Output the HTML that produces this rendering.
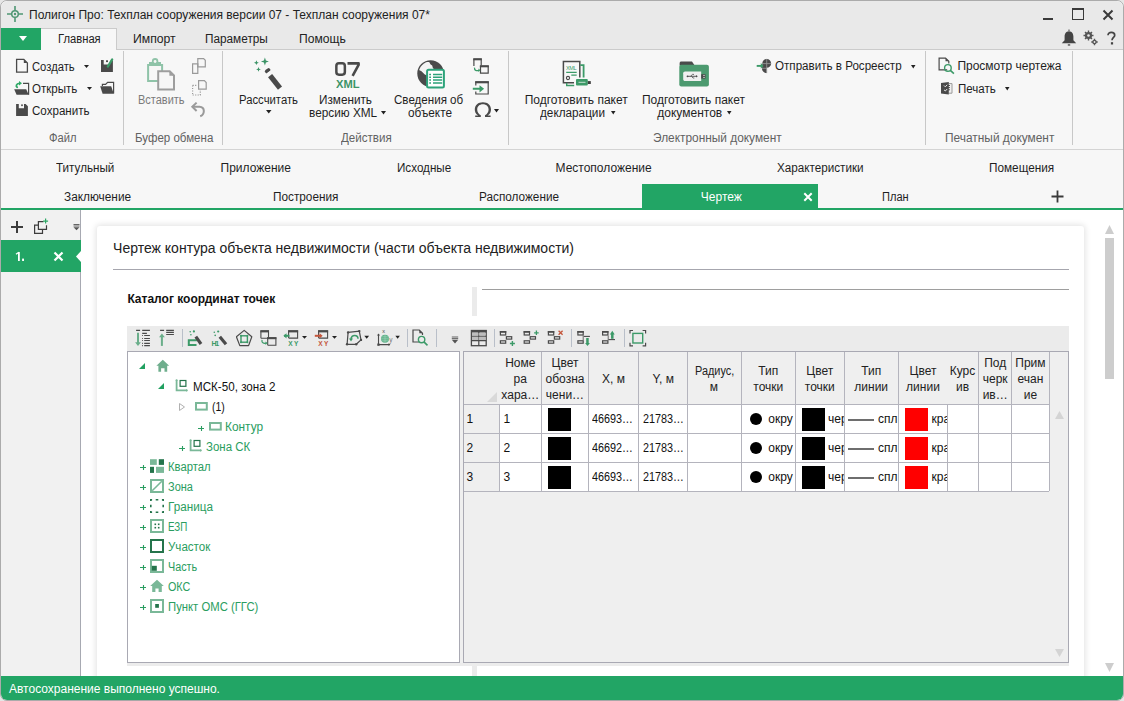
<!DOCTYPE html>
<html><head><meta charset="utf-8"><style>
html,body{margin:0;padding:0;width:1124px;height:701px;overflow:hidden;background:#e6e6e6;}
body{position:relative;font-family:'Liberation Sans', sans-serif;}
div,svg{position:absolute;box-sizing:border-box;}
</style></head><body>
<div style="left:0;top:0;width:1124px;height:701px;background:#ffffff;border:1px solid #ababab;border-radius:7px 7px 7px 7px;overflow:hidden"></div>
<div style="left:1px;top:1px;width:1122px;height:49px;background:#e9e9e9;border-radius:7px 7px 0 0"></div>
<div style="left:1px;top:49px;width:1122px;height:1px;background:#cbcbcb;"></div>
<div style="left:1px;top:28px;width:40px;height:22px;background:#22a565;"></div>
<svg style="left:19px;top:36px;" width="8" height="5" viewBox="0 0 8 5"><path d="M0 0H8L4 5Z" fill="#fff"/></svg>
<div style="left:41px;top:28px;width:76px;height:22px;background:#f7f7f7;border-top:1px solid #cbcbcb;border-right:1px solid #cbcbcb"></div>
<div style="left:1px;top:50px;width:1122px;height:99px;background:#f7f7f7;"></div>
<div style="left:1px;top:149px;width:1122px;height:1px;background:#d4d4d4;"></div>
<div style="left:123px;top:51px;width:1px;height:94px;background:#c8c8c8;"></div>
<div style="left:222px;top:51px;width:1px;height:94px;background:#c8c8c8;"></div>
<div style="left:508px;top:51px;width:1px;height:94px;background:#c8c8c8;"></div>
<div style="left:925px;top:51px;width:1px;height:94px;background:#c8c8c8;"></div>
<div style="left:1072px;top:51px;width:1px;height:94px;background:#c8c8c8;"></div>
<div style="left:1px;top:150px;width:1122px;height:58px;background:#f7f7f7;"></div>
<div style="left:1px;top:208px;width:1122px;height:2px;background:#22a565;"></div>
<div style="left:642px;top:184px;width:176px;height:24px;background:#22a565;"></div>
<div style="left:1px;top:210px;width:79px;height:466px;background:#f1f1f1;"></div>
<div style="left:80px;top:210px;width:1px;height:466px;background:#a7a9b2;"></div>
<div style="left:1px;top:240px;width:80px;height:32px;background:#22a565;"></div>
<svg style="left:76px;top:250.5px;" width="5" height="11" viewBox="0 0 5 11"><path d="M5 0V11L0 5.5Z" fill="#fff"/></svg>
<div style="left:97px;top:226px;width:987px;height:470px;background:#fff;border-radius:3px;box-shadow:0 0 6px 1px rgba(0,0,0,0.12)"></div>
<div style="left:1105px;top:238px;width:9px;height:141px;background:#cdcdcd;"></div>
<svg style="left:1105px;top:225px;" width="9" height="9" viewBox="0 0 9 9"><path d="M0 9H9L4.5 0Z" fill="#cdcdcd"/></svg>
<svg style="left:1105px;top:663px;" width="9" height="9" viewBox="0 0 9 9"><path d="M0 0H9L4.5 9Z" fill="#cdcdcd"/></svg>
<div style="left:1px;top:676px;width:1122px;height:24px;background:#22a565;border-radius:0 0 6px 6px"></div>
<div style="left:29.00px;top:9px;font-size:12px;line-height:12px;color:#222;font-weight:normal;white-space:pre;">Полигон Про: Техплан сооружения версии 07 - Техплан сооружения 07*</div>
<div style="left:57.70px;top:33px;font-size:12px;line-height:12px;color:#222;font-weight:normal;white-space:pre;transform:scaleX(0.9346);transform-origin:0 0;">Главная</div>
<div style="left:132.60px;top:33px;font-size:12px;line-height:12px;color:#222;font-weight:normal;white-space:pre;transform:scaleX(1.0178);transform-origin:0 0;">Импорт</div>
<div style="left:205.20px;top:33px;font-size:12px;line-height:12px;color:#222;font-weight:normal;white-space:pre;transform:scaleX(0.9817);transform-origin:0 0;">Параметры</div>
<div style="left:298.70px;top:33px;font-size:12px;line-height:12px;color:#222;font-weight:normal;white-space:pre;transform:scaleX(1.0073);transform-origin:0 0;">Помощь</div>
<div style="left:32.20px;top:61px;font-size:12px;line-height:12px;color:#1f1f1f;font-weight:normal;white-space:pre;transform:scaleX(0.9362);transform-origin:0 0;">Создать</div>
<div style="left:32.20px;top:83px;font-size:12px;line-height:12px;color:#1f1f1f;font-weight:normal;white-space:pre;transform:scaleX(0.9631);transform-origin:0 0;">Открыть</div>
<div style="left:32.20px;top:104.5px;font-size:12px;line-height:12px;color:#1f1f1f;font-weight:normal;white-space:pre;transform:scaleX(0.9658);transform-origin:0 0;">Сохранить</div>
<div style="left:49.20px;top:131.5px;font-size:12px;line-height:12px;color:#626262;font-weight:normal;white-space:pre;transform:scaleX(0.9317);transform-origin:0 0;">Файл</div>
<div style="left:137.90px;top:94px;font-size:12px;line-height:12px;color:#7b7b7b;font-weight:normal;white-space:pre;transform:scaleX(0.9140);transform-origin:0 0;">Вставить</div>
<div style="left:134.50px;top:131.5px;font-size:12px;line-height:12px;color:#626262;font-weight:normal;white-space:pre;transform:scaleX(0.9602);transform-origin:0 0;">Буфер обмена</div>
<div style="left:238.70px;top:94px;font-size:12px;line-height:12px;color:#1f1f1f;font-weight:normal;white-space:pre;transform:scaleX(0.9421);transform-origin:0 0;">Рассчитать</div>
<div style="left:318.90px;top:94px;font-size:12px;line-height:12px;color:#1f1f1f;font-weight:normal;white-space:pre;transform:scaleX(0.9789);transform-origin:0 0;">Изменить</div>
<div style="left:308.70px;top:106.6px;font-size:12px;line-height:12px;color:#1f1f1f;font-weight:normal;white-space:pre;transform:scaleX(0.9839);transform-origin:0 0;">версию XML</div>
<div style="left:341.30px;top:131.5px;font-size:12px;line-height:12px;color:#626262;font-weight:normal;white-space:pre;transform:scaleX(0.9643);transform-origin:0 0;">Действия</div>
<div style="left:394.20px;top:94px;font-size:12px;line-height:12px;color:#1f1f1f;font-weight:normal;white-space:pre;transform:scaleX(0.9651);transform-origin:0 0;">Сведения об</div>
<div style="left:407.50px;top:106.6px;font-size:12px;line-height:12px;color:#1f1f1f;font-weight:normal;white-space:pre;transform:scaleX(0.9832);transform-origin:0 0;">объекте</div>
<div style="left:524.70px;top:94px;font-size:12px;line-height:12px;color:#1f1f1f;font-weight:normal;white-space:pre;">Подготовить пакет</div>
<div style="left:540.00px;top:106.6px;font-size:12px;line-height:12px;color:#1f1f1f;font-weight:normal;white-space:pre;transform:scaleX(0.9793);transform-origin:0 0;">декларации</div>
<div style="left:641.90px;top:94px;font-size:12px;line-height:12px;color:#1f1f1f;font-weight:normal;white-space:pre;">Подготовить пакет</div>
<div style="left:657.30px;top:106.6px;font-size:12px;line-height:12px;color:#1f1f1f;font-weight:normal;white-space:pre;">документов</div>
<div style="left:652.80px;top:131.5px;font-size:12px;line-height:12px;color:#626262;font-weight:normal;white-space:pre;transform:scaleX(0.9898);transform-origin:0 0;">Электронный документ</div>
<div style="left:774.60px;top:60.2px;font-size:12px;line-height:12px;color:#1f1f1f;font-weight:normal;white-space:pre;transform:scaleX(0.9672);transform-origin:0 0;">Отправить в Росреестр</div>
<div style="left:957.40px;top:60.2px;font-size:12px;line-height:12px;color:#1f1f1f;font-weight:normal;white-space:pre;">Просмотр чертежа</div>
<div style="left:957.90px;top:82.6px;font-size:12px;line-height:12px;color:#1f1f1f;font-weight:normal;white-space:pre;transform:scaleX(0.9590);transform-origin:0 0;">Печать</div>
<div style="left:944.60px;top:131.5px;font-size:12px;line-height:12px;color:#626262;font-weight:normal;white-space:pre;transform:scaleX(0.9916);transform-origin:0 0;">Печатный документ</div>
<div style="left:56.20px;top:162.4px;font-size:12px;line-height:12px;color:#1f1f1f;font-weight:normal;white-space:pre;transform:scaleX(0.9702);transform-origin:0 0;">Титульный</div>
<div style="left:220.50px;top:162.4px;font-size:12px;line-height:12px;color:#1f1f1f;font-weight:normal;white-space:pre;">Приложение</div>
<div style="left:396.50px;top:162.4px;font-size:12px;line-height:12px;color:#1f1f1f;font-weight:normal;white-space:pre;transform:scaleX(0.9708);transform-origin:0 0;">Исходные</div>
<div style="left:555.50px;top:162.4px;font-size:12px;line-height:12px;color:#1f1f1f;font-weight:normal;white-space:pre;">Местоположение</div>
<div style="left:776.50px;top:162.4px;font-size:12px;line-height:12px;color:#1f1f1f;font-weight:normal;white-space:pre;transform:scaleX(0.9732);transform-origin:0 0;">Характеристики</div>
<div style="left:988.80px;top:162.4px;font-size:12px;line-height:12px;color:#1f1f1f;font-weight:normal;white-space:pre;transform:scaleX(0.9809);transform-origin:0 0;">Помещения</div>
<div style="left:64.30px;top:190.8px;font-size:12px;line-height:12px;color:#1f1f1f;font-weight:normal;white-space:pre;transform:scaleX(0.9870);transform-origin:0 0;">Заключение</div>
<div style="left:272.60px;top:190.8px;font-size:12px;line-height:12px;color:#1f1f1f;font-weight:normal;white-space:pre;transform:scaleX(0.9812);transform-origin:0 0;">Построения</div>
<div style="left:478.70px;top:190.8px;font-size:12px;line-height:12px;color:#1f1f1f;font-weight:normal;white-space:pre;transform:scaleX(0.9807);transform-origin:0 0;">Расположение</div>
<div style="left:700.80px;top:191px;font-size:12px;line-height:12px;color:#fff;font-weight:normal;white-space:pre;">Чертеж</div>
<div style="left:882.00px;top:190.6px;font-size:12px;line-height:12px;color:#1f1f1f;font-weight:normal;white-space:pre;transform:scaleX(0.9227);transform-origin:0 0;">План</div>
<svg style="left:14px;top:250px;" width="12" height="12" viewBox="0 0 12 12"><path d="M4.9 2V11" stroke="#fff" stroke-width="1.8"/><path d="M2 4.3L4.9 2.3" stroke="#fff" stroke-width="1.3"/><rect x="8.1" y="8.6" width="1.9" height="2.4" fill="#fff"/></svg>
<div style="left:113.10px;top:241.2px;font-size:14px;line-height:14px;color:#222;font-weight:normal;white-space:pre;">Чертеж контура объекта недвижимости (части объекта недвижимости)</div>
<div style="left:113px;top:269px;width:956px;height:1px;background:#a6a6ae;"></div>
<div style="left:127.40px;top:293px;font-size:12px;line-height:12px;color:#111;font-weight:bold;white-space:pre;">Каталог координат точек</div>
<div style="left:472px;top:287px;width:5px;height:29px;background:#ebebeb;"></div>
<div style="left:482px;top:289px;width:587px;height:1px;background:#9e9e9e;"></div>
<div style="left:127px;top:326px;width:942px;height:25px;background:#ebebeb;"></div>
<div style="left:127px;top:351px;width:333px;height:312px;background:#fff;border:1px solid #a9a9b3"></div>
<div style="left:460px;top:351px;width:3px;height:312px;background:#efefef;"></div>
<div style="left:463px;top:351px;width:606px;height:312px;background:#efefef;border:1px solid #a9a9b3"></div>
<div style="left:127px;top:663px;width:942px;height:3px;background:#ececec;"></div>
<div style="left:472px;top:666px;width:5px;height:10px;background:#ebebeb;"></div>
<div style="left:9.00px;top:683px;font-size:12px;line-height:12px;color:#fff;font-weight:normal;white-space:pre;">Автосохранение выполнено успешно.</div>
<div style="left:464px;top:404px;width:585px;height:1px;background:#b4b4bd;"></div>
<div style="left:500px;top:405px;width:549px;height:86px;background:#ffffff;"></div>
<div style="left:464px;top:433px;width:585px;height:1px;background:#b4b4bd;"></div>
<div style="left:464px;top:462px;width:585px;height:1px;background:#b4b4bd;"></div>
<div style="left:464px;top:491px;width:585px;height:1px;background:#b4b4bd;"></div>
<div style="left:541px;top:352px;width:1px;height:139px;background:#b4b4bd;"></div>
<div style="left:588px;top:352px;width:1px;height:139px;background:#b4b4bd;"></div>
<div style="left:638px;top:352px;width:1px;height:139px;background:#b4b4bd;"></div>
<div style="left:687px;top:352px;width:1px;height:139px;background:#b4b4bd;"></div>
<div style="left:741px;top:352px;width:1px;height:139px;background:#b4b4bd;"></div>
<div style="left:795px;top:352px;width:1px;height:139px;background:#b4b4bd;"></div>
<div style="left:844px;top:352px;width:1px;height:139px;background:#b4b4bd;"></div>
<div style="left:898px;top:352px;width:1px;height:139px;background:#b4b4bd;"></div>
<div style="left:978px;top:352px;width:1px;height:139px;background:#b4b4bd;"></div>
<div style="left:1011px;top:352px;width:1px;height:139px;background:#b4b4bd;"></div>
<div style="left:1049px;top:352px;width:1px;height:139px;background:#b4b4bd;"></div>
<div style="left:499px;top:404px;width:1px;height:87px;background:#b4b4bd;"></div>
<div style="left:947px;top:404px;width:1px;height:87px;background:#b4b4bd;"></div>
<svg style="left:487px;top:392px;" width="10" height="10" viewBox="0 0 10 10"><path d="M10 0V10H0Z" fill="#d9d9d9"/></svg>
<svg style="left:1055px;top:411px;" width="9" height="8" viewBox="0 0 9 8"><path d="M0 8H9L4.5 0Z" fill="#d4d4d4"/></svg>
<svg style="left:1055px;top:649px;" width="9" height="8" viewBox="0 0 9 8"><path d="M0 0H9L4.5 8Z" fill="#d4d4d4"/></svg>
<div style="left:505.17px;top:356.7px;font-size:12px;line-height:12px;color:#222;font-weight:normal;white-space:pre;">Номе</div>
<div style="left:513.62px;top:373px;font-size:12px;line-height:12px;color:#222;font-weight:normal;white-space:pre;">ра</div>
<div style="left:501.35px;top:389.2px;font-size:12px;line-height:12px;color:#222;font-weight:normal;white-space:pre;">хара…</div>
<div style="left:551.55px;top:356.7px;font-size:12px;line-height:12px;color:#222;font-weight:normal;white-space:pre;">Цвет</div>
<div style="left:545.55px;top:373px;font-size:12px;line-height:12px;color:#222;font-weight:normal;white-space:pre;">обозна</div>
<div style="left:545.87px;top:389.2px;font-size:12px;line-height:12px;color:#222;font-weight:normal;white-space:pre;">чени…</div>
<div style="left:602.04px;top:373px;font-size:12px;line-height:12px;color:#222;font-weight:normal;white-space:pre;">X, м</div>
<div style="left:652.61px;top:373px;font-size:12px;line-height:12px;color:#222;font-weight:normal;white-space:pre;">Y, м</div>
<div style="left:694.60px;top:365px;font-size:12px;line-height:12px;color:#222;font-weight:normal;white-space:pre;transform:scaleX(0.9077);transform-origin:0 0;">Радиус,</div>
<div style="left:709.67px;top:380.6px;font-size:12px;line-height:12px;color:#222;font-weight:normal;white-space:pre;">м</div>
<div style="left:758.29px;top:364.6px;font-size:12px;line-height:12px;color:#222;font-weight:normal;white-space:pre;">Тип</div>
<div style="left:753.31px;top:380.6px;font-size:12px;line-height:12px;color:#222;font-weight:normal;white-space:pre;">точки</div>
<div style="left:806.35px;top:364.6px;font-size:12px;line-height:12px;color:#222;font-weight:normal;white-space:pre;">Цвет</div>
<div style="left:804.81px;top:380.6px;font-size:12px;line-height:12px;color:#222;font-weight:normal;white-space:pre;">точки</div>
<div style="left:861.19px;top:364.6px;font-size:12px;line-height:12px;color:#222;font-weight:normal;white-space:pre;">Тип</div>
<div style="left:854.33px;top:380.6px;font-size:12px;line-height:12px;color:#222;font-weight:normal;white-space:pre;">линии</div>
<div style="left:909.55px;top:364.6px;font-size:12px;line-height:12px;color:#222;font-weight:normal;white-space:pre;">Цвет</div>
<div style="left:906.12px;top:380.6px;font-size:12px;line-height:12px;color:#222;font-weight:normal;white-space:pre;">линии</div>
<div style="left:949.73px;top:364.6px;font-size:12px;line-height:12px;color:#222;font-weight:normal;white-space:pre;">Курс</div>
<div style="left:955.96px;top:380.6px;font-size:12px;line-height:12px;color:#222;font-weight:normal;white-space:pre;">ив</div>
<div style="left:984.18px;top:356.7px;font-size:12px;line-height:12px;color:#222;font-weight:normal;white-space:pre;">Под</div>
<div style="left:982.77px;top:373px;font-size:12px;line-height:12px;color:#222;font-weight:normal;white-space:pre;">черк</div>
<div style="left:982.66px;top:389.2px;font-size:12px;line-height:12px;color:#222;font-weight:normal;white-space:pre;">ив…</div>
<div style="left:1015.27px;top:356.7px;font-size:12px;line-height:12px;color:#222;font-weight:normal;white-space:pre;">Прим</div>
<div style="left:1017.49px;top:373px;font-size:12px;line-height:12px;color:#222;font-weight:normal;white-space:pre;">ечан</div>
<div style="left:1023.70px;top:389.2px;font-size:12px;line-height:12px;color:#222;font-weight:normal;white-space:pre;">ие</div>
<div style="left:466.50px;top:413.3px;font-size:12px;line-height:12px;color:#111;font-weight:normal;white-space:pre;">1</div>
<div style="left:503.50px;top:413.3px;font-size:12px;line-height:12px;color:#111;font-weight:normal;white-space:pre;">1</div>
<div style="left:548px;top:408px;width:23px;height:23px;background:#000;"></div>
<div style="left:591.80px;top:413.3px;font-size:12px;line-height:12px;color:#111;font-weight:normal;white-space:pre;transform:scaleX(0.9014);transform-origin:0 0;">46693…</div>
<div style="left:642.70px;top:413.3px;font-size:12px;line-height:12px;color:#111;font-weight:normal;white-space:pre;transform:scaleX(0.9014);transform-origin:0 0;">21783…</div>
<svg style="left:750px;top:413px;" width="12" height="12" viewBox="0 0 12 12"><circle cx="6" cy="6" r="6" fill="#000"/></svg>
<div style="left:742px;top:409.3px;width:53px;height:20px;overflow:hidden"><div style="left:26.30px;top:4px;font-size:12px;line-height:12px;color:#111;font-weight:normal;white-space:pre;">окру</div></div>
<div style="left:802px;top:408px;width:23px;height:23px;background:#000;"></div>
<div style="left:796px;top:409.3px;width:48px;height:20px;overflow:hidden"><div style="left:32.00px;top:4px;font-size:12px;line-height:12px;color:#111;font-weight:normal;white-space:pre;">чер</div></div>
<div style="left:848px;top:419px;width:26px;height:2px;background:#6e6e6e;"></div>
<div style="left:845px;top:409.3px;width:53px;height:20px;overflow:hidden"><div style="left:33.00px;top:4px;font-size:12px;line-height:12px;color:#111;font-weight:normal;white-space:pre;">спл</div></div>
<div style="left:905px;top:408px;width:23px;height:23px;background:#ff0000;"></div>
<div style="left:899px;top:409.3px;width:48px;height:20px;overflow:hidden"><div style="left:32.50px;top:4px;font-size:12px;line-height:12px;color:#111;font-weight:normal;white-space:pre;">кра</div></div>
<div style="left:466.50px;top:442.3px;font-size:12px;line-height:12px;color:#111;font-weight:normal;white-space:pre;">2</div>
<div style="left:503.50px;top:442.3px;font-size:12px;line-height:12px;color:#111;font-weight:normal;white-space:pre;">2</div>
<div style="left:548px;top:437px;width:23px;height:23px;background:#000;"></div>
<div style="left:591.80px;top:442.3px;font-size:12px;line-height:12px;color:#111;font-weight:normal;white-space:pre;transform:scaleX(0.9014);transform-origin:0 0;">46692…</div>
<div style="left:642.70px;top:442.3px;font-size:12px;line-height:12px;color:#111;font-weight:normal;white-space:pre;transform:scaleX(0.9014);transform-origin:0 0;">21783…</div>
<svg style="left:750px;top:442px;" width="12" height="12" viewBox="0 0 12 12"><circle cx="6" cy="6" r="6" fill="#000"/></svg>
<div style="left:742px;top:438.3px;width:53px;height:20px;overflow:hidden"><div style="left:26.30px;top:4px;font-size:12px;line-height:12px;color:#111;font-weight:normal;white-space:pre;">окру</div></div>
<div style="left:802px;top:437px;width:23px;height:23px;background:#000;"></div>
<div style="left:796px;top:438.3px;width:48px;height:20px;overflow:hidden"><div style="left:32.00px;top:4px;font-size:12px;line-height:12px;color:#111;font-weight:normal;white-space:pre;">чер</div></div>
<div style="left:848px;top:448px;width:26px;height:2px;background:#6e6e6e;"></div>
<div style="left:845px;top:438.3px;width:53px;height:20px;overflow:hidden"><div style="left:33.00px;top:4px;font-size:12px;line-height:12px;color:#111;font-weight:normal;white-space:pre;">спл</div></div>
<div style="left:905px;top:437px;width:23px;height:23px;background:#ff0000;"></div>
<div style="left:899px;top:438.3px;width:48px;height:20px;overflow:hidden"><div style="left:32.50px;top:4px;font-size:12px;line-height:12px;color:#111;font-weight:normal;white-space:pre;">кра</div></div>
<div style="left:466.50px;top:471.3px;font-size:12px;line-height:12px;color:#111;font-weight:normal;white-space:pre;">3</div>
<div style="left:503.50px;top:471.3px;font-size:12px;line-height:12px;color:#111;font-weight:normal;white-space:pre;">3</div>
<div style="left:548px;top:466px;width:23px;height:23px;background:#000;"></div>
<div style="left:591.80px;top:471.3px;font-size:12px;line-height:12px;color:#111;font-weight:normal;white-space:pre;transform:scaleX(0.9014);transform-origin:0 0;">46693…</div>
<div style="left:642.70px;top:471.3px;font-size:12px;line-height:12px;color:#111;font-weight:normal;white-space:pre;transform:scaleX(0.9014);transform-origin:0 0;">21783…</div>
<svg style="left:750px;top:471px;" width="12" height="12" viewBox="0 0 12 12"><circle cx="6" cy="6" r="6" fill="#000"/></svg>
<div style="left:742px;top:467.3px;width:53px;height:20px;overflow:hidden"><div style="left:26.30px;top:4px;font-size:12px;line-height:12px;color:#111;font-weight:normal;white-space:pre;">окру</div></div>
<div style="left:802px;top:466px;width:23px;height:23px;background:#000;"></div>
<div style="left:796px;top:467.3px;width:48px;height:20px;overflow:hidden"><div style="left:32.00px;top:4px;font-size:12px;line-height:12px;color:#111;font-weight:normal;white-space:pre;">чер</div></div>
<div style="left:848px;top:477px;width:26px;height:2px;background:#6e6e6e;"></div>
<div style="left:845px;top:467.3px;width:53px;height:20px;overflow:hidden"><div style="left:33.00px;top:4px;font-size:12px;line-height:12px;color:#111;font-weight:normal;white-space:pre;">спл</div></div>
<div style="left:905px;top:466px;width:23px;height:23px;background:#ff0000;"></div>
<div style="left:899px;top:467.3px;width:48px;height:20px;overflow:hidden"><div style="left:32.50px;top:4px;font-size:12px;line-height:12px;color:#111;font-weight:normal;white-space:pre;">кра</div></div>
<svg style="left:139px;top:363px;" width="7" height="7" viewBox="0 0 7 7"><path d="M6 0V6H0Z" fill="#21a060"/></svg>
<svg style="left:158px;top:383px;" width="7" height="7" viewBox="0 0 7 7"><path d="M6 0V6H0Z" fill="#21a060"/></svg>
<svg style="left:179px;top:403px;" width="6" height="8" viewBox="0 0 6 8"><path d="M0.5 0.5L5.5 4L0.5 7.5Z" fill="none" stroke="#b0b0b0" stroke-width="1"/></svg>
<div style="left:192.80px;top:381px;font-size:12px;line-height:12px;color:#111;font-weight:normal;white-space:pre;transform:scaleX(0.9692);transform-origin:0 0;">МСК-50, зона 2</div>
<div style="left:211.60px;top:400.6px;font-size:12px;line-height:12px;color:#111;font-weight:normal;white-space:pre;transform:scaleX(0.8724);transform-origin:0 0;">(1)</div>
<svg style="left:198px;top:425px;" width="7" height="7" viewBox="0 0 7 7"><path d="M0 3.5H6M3.5 1V6" stroke="#2a9d60" stroke-width="1.1"/></svg>
<div style="left:225.30px;top:420.6px;font-size:12px;line-height:12px;color:#2a9d60;font-weight:normal;white-space:pre;transform:scaleX(0.9904);transform-origin:0 0;">Контур</div>
<svg style="left:179px;top:445px;" width="7" height="7" viewBox="0 0 7 7"><path d="M0 3.5H6M3.5 1V6" stroke="#2a9d60" stroke-width="1.1"/></svg>
<div style="left:205.90px;top:441px;font-size:12px;line-height:12px;color:#2a9d60;font-weight:normal;white-space:pre;transform:scaleX(0.9563);transform-origin:0 0;">Зона СК</div>
<svg style="left:140px;top:464px;" width="7" height="7" viewBox="0 0 7 7"><path d="M0 3.5H6M3.5 1V6" stroke="#2a9d60" stroke-width="1.1"/></svg>
<div style="left:167.70px;top:460.6px;font-size:12px;line-height:12px;color:#2a9d60;font-weight:normal;white-space:pre;transform:scaleX(0.9414);transform-origin:0 0;">Квартал</div>
<svg style="left:140px;top:484px;" width="7" height="7" viewBox="0 0 7 7"><path d="M0 3.5H6M3.5 1V6" stroke="#2a9d60" stroke-width="1.1"/></svg>
<div style="left:167.70px;top:480.6px;font-size:12px;line-height:12px;color:#2a9d60;font-weight:normal;white-space:pre;transform:scaleX(0.9143);transform-origin:0 0;">Зона</div>
<svg style="left:140px;top:504px;" width="7" height="7" viewBox="0 0 7 7"><path d="M0 3.5H6M3.5 1V6" stroke="#2a9d60" stroke-width="1.1"/></svg>
<div style="left:167.70px;top:500.6px;font-size:12px;line-height:12px;color:#2a9d60;font-weight:normal;white-space:pre;transform:scaleX(0.9748);transform-origin:0 0;">Граница</div>
<svg style="left:140px;top:524px;" width="7" height="7" viewBox="0 0 7 7"><path d="M0 3.5H6M3.5 1V6" stroke="#2a9d60" stroke-width="1.1"/></svg>
<div style="left:167.70px;top:520.6px;font-size:12px;line-height:12px;color:#2a9d60;font-weight:normal;white-space:pre;transform:scaleX(0.8169);transform-origin:0 0;">ЕЗП</div>
<svg style="left:140px;top:544px;" width="7" height="7" viewBox="0 0 7 7"><path d="M0 3.5H6M3.5 1V6" stroke="#2a9d60" stroke-width="1.1"/></svg>
<div style="left:167.70px;top:540.6px;font-size:12px;line-height:12px;color:#2a9d60;font-weight:normal;white-space:pre;transform:scaleX(0.9648);transform-origin:0 0;">Участок</div>
<svg style="left:140px;top:564px;" width="7" height="7" viewBox="0 0 7 7"><path d="M0 3.5H6M3.5 1V6" stroke="#2a9d60" stroke-width="1.1"/></svg>
<div style="left:167.70px;top:560.6px;font-size:12px;line-height:12px;color:#2a9d60;font-weight:normal;white-space:pre;transform:scaleX(0.9006);transform-origin:0 0;">Часть</div>
<svg style="left:140px;top:584px;" width="7" height="7" viewBox="0 0 7 7"><path d="M0 3.5H6M3.5 1V6" stroke="#2a9d60" stroke-width="1.1"/></svg>
<div style="left:167.70px;top:580.6px;font-size:12px;line-height:12px;color:#2a9d60;font-weight:normal;white-space:pre;transform:scaleX(0.8970);transform-origin:0 0;">ОКС</div>
<svg style="left:140px;top:604px;" width="7" height="7" viewBox="0 0 7 7"><path d="M0 3.5H6M3.5 1V6" stroke="#2a9d60" stroke-width="1.1"/></svg>
<div style="left:167.70px;top:600.6px;font-size:12px;line-height:12px;color:#2a9d60;font-weight:normal;white-space:pre;transform:scaleX(0.9424);transform-origin:0 0;">Пункт ОМС (ГГС)</div>
<svg style="left:7px;top:6px;" width="16" height="16" viewBox="0 0 16 16"><circle cx="8" cy="8" r="3.3" fill="none" stroke="#4f9673" stroke-width="1.5"/><circle cx="8" cy="8" r="1.2" fill="#4f9673"/><path d="M8 0V4.4M8 11.6V16M0 8H4.4M11.6 8H16" stroke="#4f9673" stroke-width="1.6"/></svg>
<div style="left:1043px;top:18px;width:10px;height:2px;background:#3a3a3a;"></div>
<div style="left:1072px;top:8px;width:12px;height:12px;border:1px solid #3a3a3a;border-top-width:2px"></div>
<svg style="left:1102px;top:9px;" width="12" height="12" viewBox="0 0 12 12"><path d="M1.5 1.5L10.5 10.5M10.5 1.5L1.5 10.5" stroke="#3a3a3a" stroke-width="2"/></svg>
<svg style="left:1060px;top:29px;" width="18" height="18" viewBox="0 0 18 18"><path d="M9 2.2C5.8 2.2 4.6 5 4.6 7.5V11.2L1.8 14.2H16.2L13.4 11.2V7.5C13.4 5 12.2 2.2 9 2.2Z" fill="#444"/><rect x="7.8" y="15.3" width="2.4" height="1.3" fill="#444"/><rect x="8.2" y="0.6" width="1.6" height="1.2" fill="#666"/></svg>
<svg style="left:1083px;top:30px;" width="16" height="16" viewBox="0 0 16 16"><g fill="#555"><circle cx="5.5" cy="5.5" r="3.6"/><circle cx="11.5" cy="12" r="2.3"/></g><g stroke="#555" stroke-width="1.4"><path d="M5.5 0.5V10.5M0.5 5.5H10.5M2 2L9 9M9 2L2 9"/><path d="M11.5 8.8V15.2M8.3 12H14.7"/></g><circle cx="5.5" cy="5.5" r="1.3" fill="#ebebeb"/><circle cx="11.5" cy="12" r="0.9" fill="#ebebeb"/></svg>
<svg style="left:1106px;top:31px;" width="11" height="15" viewBox="0 0 11 15"><path d="M2 4.2C2 2.3 3.4 1.3 5.3 1.3C7.3 1.3 8.7 2.5 8.7 4.2C8.7 6.3 6 6.6 6 9.2" fill="none" stroke="#444" stroke-width="1.7"/><rect x="4.9" y="11.2" width="2.2" height="2.3" fill="#444"/></svg>
<svg style="left:12px;top:56px;" width="20" height="20" viewBox="0 0 20 20"><path d="M4.6 3.4H11.8L15.4 7V16.2H4.6Z" fill="none" stroke="#4a4a4a" stroke-width="1.3"/><path d="M11.8 3.4V7H15.4Z" fill="#4a4a4a"/></svg>
<svg style="left:98px;top:56px;" width="20" height="20" viewBox="0 0 20 20"><path d="M3 4H5.7V8.4H10.3L11.5 7.5L14.9 4V15.9H3Z" fill="#4a4a4a"/><rect x="8" y="4.3" width="2" height="1.8" fill="#4a4a4a"/><path d="M9.8 10.6L14.2 3.4" stroke="#3a9a66" stroke-width="2.2" stroke-linecap="round"/></svg>
<svg style="left:12px;top:78px;" width="20" height="20" viewBox="0 0 20 20"><path d="M11 5.3H16.6V16.7" fill="none" stroke="#4a4a4a" stroke-width="1.2"/><path d="M2.2 11.2H14.2L16.7 16.7H4.6Z" fill="#4a4a4a"/><path d="M5.2 9.3C3.6 8.2 4.2 5.6 7.4 5.3" fill="none" stroke="#2ea866" stroke-width="1.8" stroke-linecap="round"/><path d="M7 3L10 5.3L7 7.6Z" fill="#2ea866"/></svg>
<svg style="left:98px;top:78px;" width="20" height="20" viewBox="0 0 20 20"><path d="M4.4 8V6.3H7.6L9.6 4.3H15.6V15.6" fill="none" stroke="#4a4a4a" stroke-width="1.2"/><path d="M2.2 8.3H13.2L15.7 15.8H4.6Z" fill="#4a4a4a"/></svg>
<svg style="left:12px;top:100px;" width="20" height="20" viewBox="0 0 20 20"><path d="M4.1 4H6.8V8.3H12V4H13.6L15.9 6.2V15.9H4.1Z" fill="#4a4a4a"/><rect x="9.2" y="4.4" width="1.6" height="1.7" fill="#4a4a4a"/></svg>
<svg style="left:84px;top:65px;" width="5" height="3" viewBox="0 0 5 3"><path d="M0 0H5L2.5 3Z" fill="#222"/></svg>
<svg style="left:87px;top:87px;" width="5" height="3" viewBox="0 0 5 3"><path d="M0 0H5L2.5 3Z" fill="#222"/></svg>
<svg style="left:142px;top:54px;" width="36" height="37" viewBox="0 0 36 37"><g fill="none" stroke="#8fc3a8" stroke-width="2"><rect x="6.1" y="11" width="14" height="16"/></g><path d="M7 8H19V11H7Z" fill="#8fc3a8"/><circle cx="13.1" cy="7.3" r="3.2" fill="#8fc3a8"/><circle cx="13.1" cy="7.5" r="1.4" fill="#f7f7f7"/><path d="M16.2 17.2H27.7L32 21.5V35.5H16.2Z" fill="#f7f7f7" stroke="#9e9e9e" stroke-width="2"/><path d="M27.4 17.2V21.8H32Z" fill="#9e9e9e"/></svg>
<svg style="left:188px;top:54px;" width="22" height="66" viewBox="0 0 22 66"><g fill="none" stroke="#9a9a9a" stroke-width="1.2"><path d="M4.6 9.8H9.8V19.3H4.6Z"/><path d="M9.8 4.6H15.6L17.3 6.3V12.8H9.8Z"/><path d="M10.6 26.7H16.4L18.2 28.5V35.1H10.6Z"/><path d="M4.6 31.4H9.6M4.6 31.4V41M4.6 41H12.3V36" stroke-dasharray="1.2 1.3"/><path d="M12.2 62.3C16.8 60.5 17.5 53.2 11.5 52.8H4.3" stroke-width="2"/><path d="M8.6 48.6L4.3 52.8L8.6 57" stroke-width="2"/></g></svg>
<svg style="left:250px;top:56px;" width="36" height="36" viewBox="0 0 36 36"><g fill="#3c9467"><path d="M14.9 1.6L15.9 4.6L18.9 5.6L15.9 6.6L14.9 9.6L13.9 6.6L10.9 5.6L13.9 4.6Z"/><path d="M6.4 4.3L7.1 6L8.8 6.7L7.1 7.4L6.4 9.1L5.7 7.4L4 6.7L5.7 6Z"/><path d="M8.5 11L9.2 12.7L10.9 13.4L9.2 14.1L8.5 15.8L7.8 14.1L6.1 13.4L7.8 12.7Z"/></g><path d="M20.1 19.6L30 32.1" stroke="#4a4a4a" stroke-width="5.2"/><path d="M15.9 15.6L19.3 13.2" stroke="#4a4a4a" stroke-width="3"/><path d="M15.4 16.6L19.9 13.0" stroke="#4a4a4a" stroke-width="2.6" transform="rotate(0)"/></svg>
<svg style="left:266px;top:110px;" width="6" height="4" viewBox="0 0 6 4"><path d="M0 0H5.5L2.75 3.5Z" fill="#222"/></svg>
<svg style="left:328px;top:56px;" width="36" height="36" viewBox="0 0 36 36"><rect x="8.35" y="7.35" width="8.5" height="11.3" rx="2.6" fill="none" stroke="#4a4a4a" stroke-width="2.5"/><path d="M19.5 7.4H30.6V8.9L24.6 19.8" fill="none" stroke="#4a4a4a" stroke-width="2.6" stroke-linejoin="round"/></svg>
<div style="left:335.50px;top:78.6px;font-size:11px;line-height:11px;color:#3c9467;font-weight:bold;white-space:pre;transform:scaleX(1.0114);transform-origin:0 0;">XML</div>
<svg style="left:381px;top:111px;" width="5" height="3.5" viewBox="0 0 5 3.5"><path d="M0 0H5L2.5 3.5Z" fill="#222"/></svg>
<svg style="left:413px;top:56px;" width="36" height="36" viewBox="0 0 36 36"><defs><clipPath id="gc"><circle cx="17.6" cy="17.5" r="11.9"/></clipPath></defs><circle cx="17.6" cy="17.5" r="13.3" fill="#4a4a4a"/><path clip-path="url(#gc)" d="M2 6H16.2L17.6 8.4L19.2 9.4L19.8 11.8L21.2 13.5L14.2 19.8L11.5 18.2L8.5 15.2L2 12Z" fill="#f4f4f4"/><rect x="14.1" y="13.8" width="16.8" height="17.8" rx="1.5" fill="#fff" stroke="#2da37a" stroke-width="2"/><g stroke="#2da37a" stroke-width="1.5"><path d="M16.2 18.5H18M20 18.5H29.2M16.2 21.3H18M20 21.3H29.2M16.2 24.1H18M20 24.1H29.2M16.2 27H18M20 27H29.2"/></g></svg>
<svg style="left:470px;top:54px;" width="32" height="66" viewBox="0 0 32 66"><g fill="none" stroke="#4a4a4a" stroke-width="1.2"><path d="M3.9 12V5.2H11.2V11.5"/><path d="M10.5 12H18.2V19.2H10.5Z"/><path d="M5.8 31.5V27.9H18.2V40H5.8V37.5"/></g><rect x="3.3" y="4.3" width="8.5" height="2" fill="#4a4a4a"/><rect x="9.9" y="11.3" width="8.9" height="2" fill="#4a4a4a"/><rect x="5.2" y="27.3" width="13.6" height="2" fill="#4a4a4a"/><path d="M4.5 13.6C4.2 16.5 6.5 17 9 16.3" fill="none" stroke="#3c9a68" stroke-width="1.3"/><path d="M8.5 14.5L10.5 16.3L8.3 18Z" fill="#3c9a68"/><path d="M2.8 33.8H9.5V31.2L14.1 34.8L9.5 38.4V35.8H2.8Z" fill="#3c9a68"/><path d="M5.2 63V61.5H8.2C5.5 60 4.8 57.5 4.8 55.5C4.8 51 8.2 48.2 12.9 48.2C17.6 48.2 21 51 21 55.5C21 57.5 20.3 60 17.6 61.5H20.6V63H15V61.3C17.3 60 18.6 57.8 18.6 55.5C18.6 52.3 16.3 50.2 12.9 50.2C9.5 50.2 7.2 52.3 7.2 55.5C7.2 57.8 8.5 60 10.8 61.3V63Z" fill="#4a4a4a"/></svg>
<svg style="left:494px;top:109px;" width="5" height="3.5" viewBox="0 0 5 3.5"><path d="M0 0H5L2.5 3.5Z" fill="#222"/></svg>
<svg style="left:559px;top:57px;" width="36" height="36" viewBox="0 0 36 36"><path d="M15 25.8H4.4V4.6H20.8V20.5" fill="none" stroke="#4a4a4a" stroke-width="1.5"/><path d="M21.3 8.2H24.6V20.5" fill="none" stroke="#3c9a68" stroke-width="1.8"/><path d="M7.7 26V28.5H15.2" fill="none" stroke="#3c9a68" stroke-width="1.4"/><path d="M7.2 15.3H17.7M12.3 18.2H17.7" stroke="#3c9a68" stroke-width="1.3"/><text x="7" y="12.6" font-family="Liberation Sans" font-size="5.5" fill="#3c9a68" textLength="10.5">XML</text><circle cx="9" cy="21" r="1.6" fill="none" stroke="#4a4a4a" stroke-width="1.1"/><rect x="17" y="22.1" width="11.8" height="6.4" rx="1" fill="#3c9a68"/><rect x="28.8" y="24.1" width="3" height="2.9" fill="#3e3e3e"/><path d="M19.5 25.3H26.5" stroke="#e8f3ec" stroke-width="0.8"/></svg>
<svg style="left:676px;top:57px;" width="36" height="36" viewBox="0 0 36 36"><path d="M3.6 8.4V6C3.6 5 4.4 4.4 5.2 4.4H16L18.2 7.8V8.4Z" fill="#4a4a4a"/><rect x="3.3" y="7.7" width="29.6" height="21.8" rx="2" fill="#4c9a6f"/><path d="M9 14.4H25.2V24.1H9C8 24.1 7.2 23.3 7.2 22.3V16.2C7.2 15.2 8 14.4 9 14.4Z" fill="#f0f0f0"/><rect x="25.2" y="17.2" width="4.3" height="4.4" fill="#4a4a4a"/><circle cx="28" cy="18.4" r="0.6" fill="#fff"/><circle cx="28" cy="20.4" r="0.6" fill="#fff"/><path d="M11.5 19.3H20" stroke="#4a4a4a" stroke-width="0.9"/><path d="M20 18L21.8 19.3L20 20.6Z" fill="#4a4a4a"/><path d="M14.5 19.3L16.5 17.4H18M15.5 19.3L17 21H18.3" fill="none" stroke="#4a4a4a" stroke-width="0.8"/><circle cx="11.5" cy="19.3" r="0.9" fill="#4a4a4a"/></svg>
<svg style="left:611px;top:111px;" width="5" height="3.5" viewBox="0 0 5 3.5"><path d="M0 0H4.5L2.25 3.5Z" fill="#222"/></svg>
<svg style="left:727px;top:111px;" width="5" height="3.5" viewBox="0 0 5 3.5"><path d="M0 0H4.5L2.25 3.5Z" fill="#222"/></svg>
<svg style="left:752px;top:56px;" width="24" height="20" viewBox="0 0 24 20"><path d="M10.3 7.4A4.4 4.4 0 1 1 14.7 11.8V17.1C12.2 17.1 10 15.2 10 12.6Z" fill="#4a4a4a"/><path d="M14.7 2.8V17.2M10 7.6H19.3M10 12.3H14.7" stroke="#9a9a9a" stroke-width="0.8"/><path d="M4.7 9.9H9.6" stroke="#3c9a68" stroke-width="1.9"/><path d="M8.8 7L11.6 9.9L8.8 12.8Z" fill="#3c9a68"/></svg>
<svg style="left:911px;top:65px;" width="5" height="4" viewBox="0 0 5 4"><path d="M0 0H4.5L2.25 3.5Z" fill="#222"/></svg>
<svg style="left:935px;top:55px;" width="24" height="44" viewBox="0 0 24 44"><path d="M12.2 14.8H4.1V3.1H10.5L13.8 6.2V8.5" fill="none" stroke="#4a4a4a" stroke-width="1.2"/><path d="M10.5 3.1V6.3H13.8Z" fill="#4a4a4a"/><circle cx="12.9" cy="12.9" r="3.3" fill="none" stroke="#3c9a68" stroke-width="1.4"/><path d="M15.3 15.3L18.9 18.6" stroke="#3c9a68" stroke-width="1.6"/><path d="M13.8 28.6H17V38.2H13.8" fill="#f0f0f0" stroke="#9a9a9a" stroke-width="1"/><path d="M6 28L13.8 27V39.6L6 38.6Z" fill="#4a4a4a"/><path d="M9 30.5L10.3 31.8L12.2 29.8M9 34.8L10.3 36L12.2 34" fill="none" stroke="#e8e8e8" stroke-width="1"/><path d="M13.2 30.5H15M13.2 32.6H15M13.2 34.8H15" stroke="#333" stroke-width="0.8"/></svg>
<svg style="left:1005px;top:87px;" width="5" height="3.5" viewBox="0 0 5 3.5"><path d="M0 0H4.5L2.25 3.5Z" fill="#222"/></svg>
<svg style="left:803px;top:192px;" width="10" height="10" viewBox="0 0 10 10"><path d="M1.3 1.3L8.7 8.7M8.7 1.3L1.3 8.7" stroke="#fff" stroke-width="2"/></svg>
<svg style="left:1051px;top:190px;" width="13" height="13" viewBox="0 0 13 13"><path d="M6.5 0.5V12.5M0.5 6.5H12.5" stroke="#3a3a3a" stroke-width="1.8"/></svg>
<svg style="left:11px;top:221px;" width="12" height="12" viewBox="0 0 12 12"><path d="M6 0V12M0 6H12" stroke="#3c3c3c" stroke-width="2"/></svg>
<svg style="left:33px;top:217px;" width="18" height="18" viewBox="0 0 18 18"><path d="M5.4 8.1H1.6V16.4H9.5V12.4" fill="none" stroke="#3c3c3c" stroke-width="1.2"/><path d="M10.5 4.6H5.4V12.4H13.5V8.3" fill="none" stroke="#3c3c3c" stroke-width="1.2"/><path d="M12.6 1.6V6.6M10.1 4.1H15.1" stroke="#2ea866" stroke-width="1.2"/></svg>
<svg style="left:73px;top:224px;" width="7" height="7" viewBox="0 0 7 7"><path d="M0.5 0.5H6.5M0.5 2H6.5" stroke="#555" stroke-width="0.9"/><path d="M0.5 3.3H6.5L3.5 6.3Z" fill="#555"/></svg>
<svg style="left:53px;top:251px;" width="11" height="11" viewBox="0 0 11 11"><path d="M1.5 1.5L9.5 9.5M9.5 1.5L1.5 9.5" stroke="#fff" stroke-width="2.2"/></svg>
<svg style="left:130px;top:326px;" width="22" height="24" viewBox="0 0 22 24"><g stroke="#4a4a4a" stroke-width="1.1"><path d="M6.1 4.4H10.1M12.2 4.4H19.9M12.2 7.4H16.9M14.2 9.5H19.9M14.2 12.5H19.9M14.2 14.5H19.9M14.2 17.4H19.9M14.2 19.6H19.9"/><path d="M12.2 9.5H13M12.2 12.5H13M12.2 14.5H13M12.2 17.4H13M12.2 19.6H13"/></g><path d="M8 6.8V17" stroke="#6aae8a" stroke-width="2"/><path d="M5.1 16.2H10.9L8 19.9Z" fill="#6aae8a"/></svg>
<svg style="left:150px;top:326px;" width="26" height="24" viewBox="0 0 26 24"><g stroke="#4a4a4a" stroke-width="1.1"><path d="M10.1 4.4H14.1M16.2 4.4H23.9M16.2 6.4H23.9M16.2 8.5H23.9"/></g><path d="M11.9 10.5V19.9" stroke="#6aae8a" stroke-width="2"/><path d="M9.1 11.2H14.8L11.9 7.4Z" fill="#6aae8a"/></svg>
<div style="left:182px;top:329px;width:1px;height:18px;background:#b9bfc9;"></div>
<svg style="left:180px;top:326px;" width="26" height="24" viewBox="0 0 26 24"><path d="M16.9 14.2H8.8V18.9H16.5" fill="none" stroke="#3c9a68" stroke-width="2"/><path d="M15.8 10.6L21 18" stroke="#4a4a4a" stroke-width="3.2"/><g fill="#3c9a68"><circle cx="10.2" cy="5.7" r="0.8"/><circle cx="13.9" cy="5.4" r="1.1"/><circle cx="10.9" cy="8.8" r="0.8"/></g></svg>
<svg style="left:206px;top:326px;" width="26" height="24" viewBox="0 0 26 24"><path d="M13.8 10.8L20 18.2" stroke="#4a4a4a" stroke-width="3.2"/><text x="5.6" y="19.9" font-family="Liberation Sans" font-weight="bold" font-size="7" fill="#3c9a68" textLength="7.6">H1</text><g fill="#3c9a68"><circle cx="8.3" cy="6.3" r="0.8"/><circle cx="12.2" cy="5.5" r="1.1"/><circle cx="9.2" cy="9.4" r="0.8"/></g></svg>
<svg style="left:230px;top:326px;left:236px" width="24" height="24" viewBox="0 0 24 24"><path d="M8.2 4.4L15.8 10.8L12.6 19.6H3.8L0.4 10.8Z" transform="translate(0 0)" fill="none" stroke="#4a4a4a" stroke-width="1.2" stroke-linejoin="round"/><rect x="5" y="9.8" width="6.4" height="6.4" fill="none" stroke="#3c9a68" stroke-width="1.4"/><g fill="#3c9a68"><circle cx="5" cy="9.8" r="1"/><circle cx="11.4" cy="9.8" r="1"/><circle cx="5" cy="16.2" r="1"/><circle cx="11.4" cy="16.2" r="1"/></g></svg>
<svg style="left:256px;top:326px;" width="26" height="24" viewBox="0 0 26 24"><path d="M4.9 12.3V4.9H12.5V12.3H4.9" fill="none" stroke="#4a4a4a" stroke-width="1.1"/><rect x="4.4" y="4.4" width="8.6" height="2" fill="#4a4a4a"/><path d="M11.7 19.299999999999997V11.7H19.9V19.299999999999997H11.7" fill="none" stroke="#4a4a4a" stroke-width="1.1"/><rect x="11.2" y="11.2" width="9.2" height="2" fill="#4a4a4a"/><path d="M6 13.8C5.4 17 7.5 17.6 10 17.2" fill="none" stroke="#3c9a68" stroke-width="1.2"/><path d="M9.6 15.4L11.6 17.1L9.4 18.9Z" fill="#3c9a68"/></svg>
<svg style="left:280px;top:326px;" width="30" height="24" viewBox="0 0 30 24"><path d="M8.6 12.100000000000001V4.9H17.6V12.100000000000001H8.6" fill="none" stroke="#4a4a4a" stroke-width="1.1"/><rect x="8.1" y="4.4" width="10" height="2" fill="#4a4a4a"/><path d="M4 9.8H9.5" stroke="#3c9a68" stroke-width="2"/><path d="M6.5 7.2L3.4 9.8L6.5 12.4Z" fill="#3c9a68"/><text x="8.3" y="19.9" font-family="Liberation Sans" font-weight="bold" font-size="6.5" fill="#3c9a68" textLength="10">XY</text><path d="M22 10H27L24.5 12.8Z" fill="#222"/></svg>
<svg style="left:310px;top:326px;left:310px" width="30" height="24" viewBox="0 0 30 24"><path d="M8.6 12.100000000000001V4.9H17.6V12.100000000000001H8.6" fill="none" stroke="#4a4a4a" stroke-width="1.1"/><rect x="8.1" y="4.4" width="10" height="2" fill="#4a4a4a"/><path d="M4.8 9.8H10.3" stroke="#c4553a" stroke-width="2"/><path d="M9.6 7.2L12.6 9.8L9.6 12.4Z" fill="#c4553a"/><text x="8.3" y="19.9" font-family="Liberation Sans" font-weight="bold" font-size="6.5" fill="#c4553a" textLength="10">XY</text><path d="M22 10H27L24.5 12.8Z" fill="#222"/></svg>
<svg style="left:340px;top:326px;" width="32" height="24" viewBox="0 0 32 24"><path d="M8.1 6.4L19.3 5.1L21 13.9L16.2 18.3H7.1Z" fill="none" stroke="#4a4a4a" stroke-width="1.2"/><g fill="#4a4a4a"><circle cx="8.1" cy="6.4" r="1.2"/><circle cx="19.3" cy="5.1" r="1.2"/><circle cx="21" cy="13.9" r="1.2"/><circle cx="16.2" cy="18.3" r="1.2"/><circle cx="7.1" cy="18.3" r="1.2"/></g><path d="M11 14C10.8 10.5 13 9.4 14.7 9.4C16.8 9.4 18 11 18 12.7" fill="none" stroke="#3c9a68" stroke-width="1.5"/><path d="M9 12.5L11 15.5L13 12.5Z" fill="#3c9a68"/><path d="M24.3 9.8H29.1L26.7 12.8Z" fill="#222"/></svg>
<svg style="left:372px;top:326px;" width="30" height="24" viewBox="0 0 30 24"><path d="M6.5 8.1V18.6H17.7" fill="none" stroke="#4a4a4a" stroke-width="1.1"/><path d="M5 9.5L6.5 7.4L8 9.5Z" fill="#4a4a4a"/><path d="M16.5 17.2L18.4 18.6L16.5 20Z" fill="#4a4a4a"/><rect x="5.3" y="17.5" width="2.3" height="2.3" fill="#4a4a4a"/><circle cx="13" cy="12.8" r="4" fill="#5fb38a"/><path d="M9.3 12.8H16.7M13 9V16.6M10.2 10.8H15.8M10.2 14.8H15.8" stroke="#a6d4bb" stroke-width="0.6"/><text x="10.3" y="7.3" font-family="Liberation Sans" font-size="5.5" fill="#4a4a4a">x</text><text x="17.2" y="15.8" font-family="Liberation Sans" font-size="6.5" fill="#777">y</text><path d="M23.4 9.8H27.9L25.65 12.8Z" fill="#222"/></svg>
<div style="left:407px;top:329px;width:1px;height:18px;background:#b9bfc9;"></div>
<svg style="left:410px;top:326px;" width="22" height="24" viewBox="0 0 22 24"><path d="M9.5 16H3V4H9.3L12.5 7.3V9" fill="none" stroke="#4a4a4a" stroke-width="1.2"/><path d="M9.3 4V7.3H12.5Z" fill="#4a4a4a"/><circle cx="11.6" cy="13.6" r="3.2" fill="none" stroke="#3c9a68" stroke-width="1.4"/><path d="M13.9 15.9L17.5 19.4" stroke="#3c9a68" stroke-width="1.6"/></svg>
<div style="left:436px;top:329px;width:1px;height:18px;background:#b9bfc9;"></div>
<svg style="left:451px;top:336px;" width="8" height="9" viewBox="0 0 8 9"><path d="M0.8 1H7.2M0.8 2.6H7.2" stroke="#555" stroke-width="0.9"/><path d="M0.8 3.8H7.2L4 7.5Z" fill="#555"/></svg>
<svg style="left:468px;top:326px;" width="22" height="24" viewBox="0 0 22 24"><rect x="3.4" y="4.5" width="14.8" height="15.2" fill="none" stroke="#4a4a4a" stroke-width="1.3"/><rect x="3" y="4" width="15.6" height="2.5" fill="#4a4a4a"/><path d="M10.8 5V19.7M3.4 10.2H18.2M3.4 14.6H18.2" stroke="#4a4a4a" stroke-width="1.2"/><g fill="#bdbdbd"><rect x="4" y="7" width="6.3" height="2.7"/><rect x="11.3" y="7" width="6.3" height="2.7"/><rect x="4" y="11" width="6.3" height="3"/><rect x="11.3" y="11" width="6.3" height="3"/></g></svg>
<div style="left:494px;top:329px;width:1px;height:18px;background:#b9bfc9;"></div>
<svg style="left:496px;top:326px;" width="22" height="24" viewBox="0 0 22 24"><g fill="none" stroke="#4a4a4a" stroke-width="1.2"><rect x="4.3999999999999995" y="5.7" width="5.3" height="3.3"/><rect x="10.399999999999999" y="10.7" width="5.3" height="2.4"/><rect x="4.3999999999999995" y="14.8" width="5.3" height="2.4"/></g><rect x="3.8" y="5.1" width="6.5" height="1.6" fill="#4a4a4a"/><path d="M16.4 15V20M13.9 17.5H18.9" stroke="#3c9a68" stroke-width="1.4"/></svg>
<svg style="left:520px;top:326px;" width="22" height="24" viewBox="0 0 22 24"><g fill="none" stroke="#4a4a4a" stroke-width="1.2"><rect x="4.2" y="5.7" width="5.3" height="3.3"/><rect x="10.2" y="10.7" width="5.3" height="2.4"/><rect x="4.2" y="14.8" width="5.3" height="2.4"/></g><rect x="3.6" y="5.1" width="6.5" height="1.6" fill="#4a4a4a"/><path d="M16.4 4.5V9M14.1 6.8H18.7" stroke="#3c9a68" stroke-width="1.3"/></svg>
<svg style="left:544px;top:326px;" width="22" height="24" viewBox="0 0 22 24"><g fill="none" stroke="#4a4a4a" stroke-width="1.2"><rect x="4.3999999999999995" y="5.7" width="5.3" height="3.3"/><rect x="10.399999999999999" y="10.7" width="5.3" height="2.4"/><rect x="4.3999999999999995" y="14.8" width="5.3" height="2.4"/></g><rect x="3.8" y="5.1" width="6.5" height="1.6" fill="#4a4a4a"/><path d="M14.6 4.8L18.6 8.8M18.6 4.8L14.6 8.8" stroke="#c4553a" stroke-width="1.3"/></svg>
<div style="left:571px;top:329px;width:1px;height:18px;background:#b9bfc9;"></div>
<svg style="left:574px;top:326px;" width="22" height="24" viewBox="0 0 22 24"><g fill="none" stroke="#4a4a4a" stroke-width="1.2"><rect x="3.9" y="5.7" width="5.3" height="3.3"/><rect x="3.9" y="14.8" width="5.3" height="2.4"/></g><rect x="3.3" y="5.1" width="6.5" height="1.6" fill="#4a4a4a"/><path d="M9.8 10.4H15.9" stroke="#4a4a4a" stroke-width="1.1"/><path d="M9.2 9.6V14.2" stroke="#4a4a4a" stroke-width="0.8"/><path d="M13.45 12V17.2" stroke="#3c9a68" stroke-width="2.5"/><path d="M11.1 17H15.9L13.5 19.9Z" fill="#3c9a68"/></svg>
<svg style="left:598px;top:326px;" width="22" height="24" viewBox="0 0 22 24"><g fill="none" stroke="#4a4a4a" stroke-width="1.2"><rect x="4.6" y="5.7" width="5.3" height="3.3"/><rect x="4.6" y="14.8" width="5.3" height="2.4"/></g><rect x="4" y="5.1" width="6.5" height="1.6" fill="#4a4a4a"/><path d="M10.5 13.6H17" stroke="#4a4a4a" stroke-width="1.1"/><path d="M10.2 9.6V14.2" stroke="#4a4a4a" stroke-width="0.8"/><path d="M14.3 8V12.8" stroke="#3c9a68" stroke-width="2.5"/><path d="M11.9 8.4H16.7L14.3 4.8Z" fill="#3c9a68"/></svg>
<div style="left:624px;top:329px;width:1px;height:18px;background:#b9bfc9;"></div>
<svg style="left:628px;top:326px;" width="22" height="24" viewBox="0 0 22 24"><path d="M2 7.5V4.5H5M14.6 4.5H17.6V7.5M17.6 16.8V19.8H14.6M5 19.8H2V16.8" fill="none" stroke="#4a4a4a" stroke-width="1.2"/><rect x="4.9" y="7.4" width="9.8" height="9.6" fill="none" stroke="#3c9a68" stroke-width="1.4"/></svg>
<svg style="left:155px;top:359px;" width="16" height="14" viewBox="0 0 16 14"><path d="M1.4 6.8L7.8 0.8L14.2 6.8H12.2V12.8H9.5V9.3H6.1V12.8H3.4V6.8Z" fill="#6fae8d"/></svg>
<svg style="left:175px;top:379px;" width="14" height="14" viewBox="0 0 14 14"><path d="M1.6 0.5V11.4H12.5" fill="none" stroke="#7ab898" stroke-width="1.8"/><path d="M0.3 2L1.6 0.2L2.9 2Z" fill="#7ab898"/><path d="M11 10L12.9 11.4L11 12.8Z" fill="#7ab898"/><rect x="5.1" y="1.5" width="5.8" height="5.8" fill="none" stroke="#24744b" stroke-width="1.2"/></svg>
<svg style="left:195px;top:402px;" width="13" height="9" viewBox="0 0 13 9"><rect x="1" y="1" width="10.8" height="6.6" fill="none" stroke="#7ab898" stroke-width="2"/></svg>
<svg style="left:209px;top:422px;" width="13" height="9" viewBox="0 0 13 9"><rect x="1" y="1" width="10.8" height="6.6" fill="none" stroke="#7ab898" stroke-width="2"/></svg>
<svg style="left:189px;top:439px;" width="14" height="14" viewBox="0 0 14 14"><path d="M1.6 0.5V11.4H12.5" fill="none" stroke="#7ab898" stroke-width="1.8"/><path d="M0.3 2L1.6 0.2L2.9 2Z" fill="#7ab898"/><path d="M11 10L12.9 11.4L11 12.8Z" fill="#7ab898"/><rect x="5.1" y="1.5" width="5.8" height="5.8" fill="none" stroke="#24744b" stroke-width="1.2"/></svg>
<svg style="left:150px;top:459px;" width="14" height="14" viewBox="0 0 14 14"><rect x="0" y="0.2" width="6.8" height="5.7" fill="#7ab898"/><rect x="8.8" y="0.2" width="5.2" height="5.7" fill="#24744b"/><rect x="0" y="7.8" width="4" height="6.1" fill="#24744b"/><rect x="6" y="7.8" width="8" height="6.1" fill="#7ab898"/></svg>
<svg style="left:150px;top:479px;" width="14" height="14" viewBox="0 0 14 14"><rect x="1" y="1" width="12" height="12" fill="none" stroke="#7ab898" stroke-width="2"/><path d="M2.2 11.8L11.8 2.2" stroke="#7ab898" stroke-width="1.6"/></svg>
<svg style="left:150px;top:499px;" width="14" height="14" viewBox="0 0 14 14"><rect x="0.8" y="0.8" width="12.4" height="12.4" fill="none" stroke="#24744b" stroke-width="1.6" stroke-dasharray="2.6 3.6" stroke-dashoffset="1.3"/></svg>
<svg style="left:150px;top:519px;" width="14" height="14" viewBox="0 0 14 14"><rect x="1" y="1" width="12" height="12" fill="none" stroke="#7ab898" stroke-width="2"/><g fill="#24744b"><rect x="4.5" y="4.5" width="1.6" height="1.6"/><rect x="7.9" y="4.5" width="1.6" height="1.6"/><rect x="4.5" y="7.9" width="1.6" height="1.6"/><rect x="7.9" y="7.9" width="1.6" height="1.6"/></g></svg>
<svg style="left:150px;top:539px;" width="14" height="14" viewBox="0 0 14 14"><rect x="1" y="1" width="12" height="12" fill="none" stroke="#24744b" stroke-width="2"/></svg>
<svg style="left:150px;top:559px;" width="14" height="14" viewBox="0 0 14 14"><rect x="1" y="1" width="12" height="12" fill="none" stroke="#7ab898" stroke-width="2"/><rect x="1.8" y="6.8" width="5" height="5" fill="#24744b"/></svg>
<svg style="left:150px;top:579px;" width="14" height="14" viewBox="0 0 14 14"><path d="M0.2 7L7 0.8L13.8 7H11.8V13H8.6V9.4H5.4V13H2.2V7Z" fill="#7ab898"/></svg>
<svg style="left:150px;top:599px;" width="14" height="14" viewBox="0 0 14 14"><rect x="1" y="1" width="12" height="12" fill="none" stroke="#7ab898" stroke-width="2"/><rect x="5.2" y="5" width="3.7" height="3.8" fill="#24744b"/></svg>
</body></html>
